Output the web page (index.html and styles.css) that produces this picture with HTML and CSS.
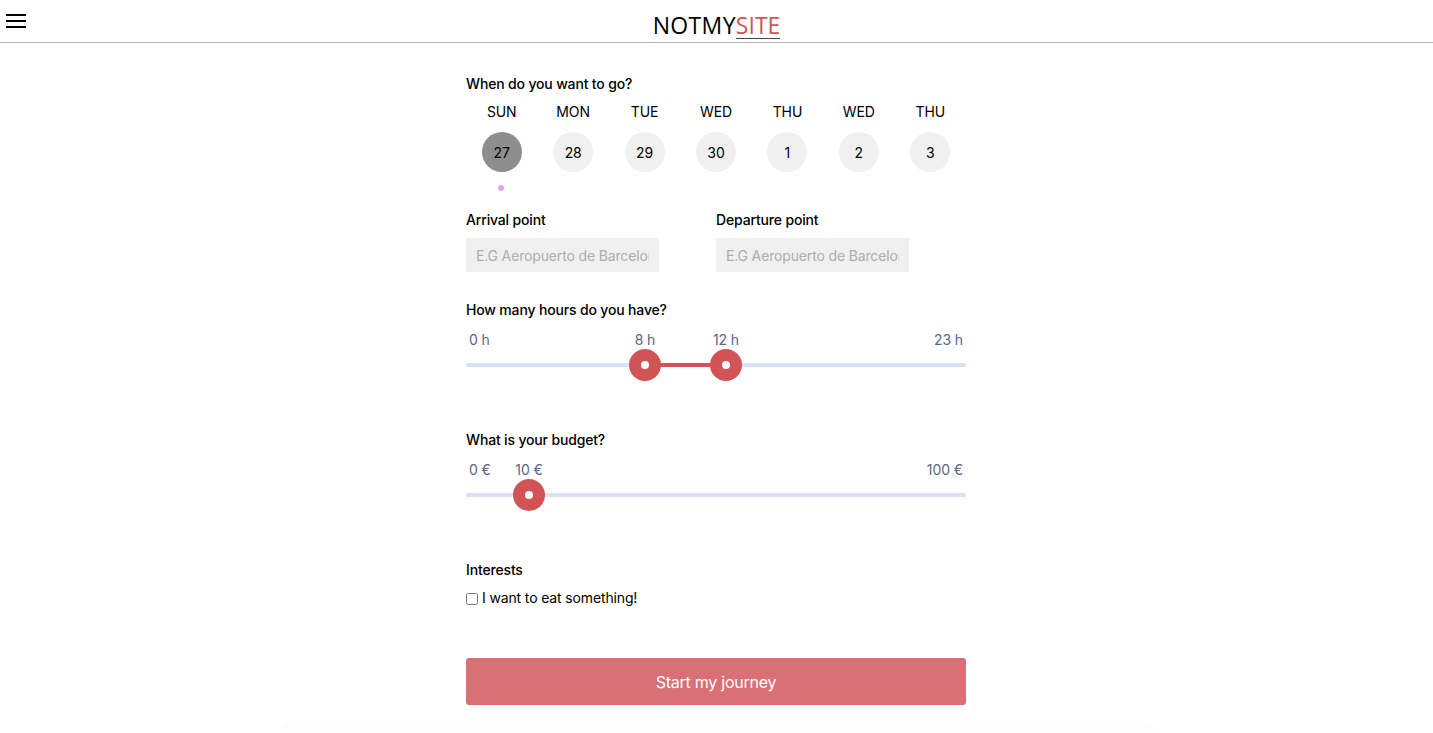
FILE: index.html
```html
<!DOCTYPE html>
<html lang="en">
<head>
<meta charset="UTF-8">
<title>NotMySite</title>
<link rel="stylesheet" href="styles.css">
</head>
<body>
<header class="topbar">
  <button class="burger" aria-label="Menu">
    <svg width="20" height="14" viewBox="0 0 20 14"><path d="M0 1h20M0 7h20M0 13h20" stroke="#000" stroke-width="2"/></svg>
  </button>
  <a class="logo"><span class="logo-dark">NOTMY</span><span class="logo-red">SITE</span></a>
</header>

<main class="form">
  <section class="when">
    <h3 class="label">When do you want to go?</h3>
    <div class="days">
      <div class="day"><span class="day-name">SUN</span><span class="day-num active">27</span><span class="dot"></span></div>
      <div class="day"><span class="day-name">MON</span><span class="day-num">28</span></div>
      <div class="day"><span class="day-name">TUE</span><span class="day-num">29</span></div>
      <div class="day"><span class="day-name">WED</span><span class="day-num">30</span></div>
      <div class="day"><span class="day-name">THU</span><span class="day-num">1</span></div>
      <div class="day"><span class="day-name">WED</span><span class="day-num">2</span></div>
      <div class="day"><span class="day-name">THU</span><span class="day-num">3</span></div>
    </div>
  </section>

  <section class="points">
    <div class="point">
      <label class="label">Arrival point</label>
      <input type="text" placeholder="E.G Aeropuerto de Barcelona">
    </div>
    <div class="point">
      <label class="label">Departure point</label>
      <input type="text" placeholder="E.G Aeropuerto de Barcelona">
    </div>
  </section>

  <section class="hours">
    <h3 class="label">How many hours do you have?</h3>
    <div class="slider">
      <span class="end end-min">0 h</span>
      <span class="end end-max">23 h</span>
      <span class="val" style="left:179px">8 h</span>
      <span class="val" style="left:260px">12 h</span>
      <div class="track"></div>
      <div class="range" style="left:179px;width:81px"></div>
      <span class="thumb" style="left:179px"></span>
      <span class="thumb" style="left:260px"></span>
    </div>
  </section>

  <section class="budget">
    <h3 class="label">What is your budget?</h3>
    <div class="slider">
      <span class="end end-min">0 €</span>
      <span class="end end-max">100 €</span>
      <span class="val" style="left:63px">10 €</span>
      <div class="track"></div>
      <span class="thumb" style="left:63px"></span>
    </div>
  </section>

  <section class="interests">
    <h3 class="label">Interests</h3>
    <label class="check"><input type="checkbox"> I want to eat something!</label>
  </section>

  <button class="start">Start my journey</button>
</main>
<div class="bottom-fade"></div>
</body>
</html>
```

FILE: styles.css
```css
* {
  box-sizing: border-box;
}
body {
  margin: 0;
  height: 733px;
  overflow: hidden;
  background: #fff;
  color: #000;
  font-family: Inter, "Liberation Sans", sans-serif;
  font-size: 14px;
  letter-spacing: -0.1px;
}
.topbar {
  position: relative;
  height: 43px;
  border-bottom: 1px solid #b5b5b5;
  text-align: center;
}
.burger {
  position: absolute;
  left: 6px;
  top: 14px;
  padding: 0;
  border: none;
  background: none;
  line-height: 0;
}
.logo {
  display: inline-block;
  margin-top: 12px;
  font-family: "Open Sans", sans-serif;
  font-size: 23px;
  line-height: 26px;
  letter-spacing: 0;
  color: #000;
}
.logo-dark {
  letter-spacing: 0.35px;
}
.logo-red {
  display: inline-block;
  line-height: 25px;
  color: #d25355;
  border-bottom: 1px solid #444;
}
.form {
  width: 501px;
  padding-right: 1px;
  margin: 0 auto;
}
.label {
  display: block;
  margin: 0;
  font-size: 14px;
  font-weight: 500;
  line-height: 18px;
  letter-spacing: -0.16px;
}
.when {
  padding-top: 32px;
}
.days {
  display: grid;
  grid-template-columns: repeat(7, 1fr);
  margin-top: 10px;
  height: 90px;
}
.day {
  display: flex;
  flex-direction: column;
  align-items: center;
}
.day-name {
  line-height: 18px;
}
.day-num {
  display: flex;
  align-items: center;
  justify-content: center;
  width: 40px;
  height: 40px;
  margin-top: 11px;
  border-radius: 50%;
  background: #f0f0f0;
}
.day-num.active {
  background: #8e8e8e;
}
.dot {
  width: 6px;
  height: 6px;
  margin-top: 13px;
  margin-right: 2px;
  border-radius: 50%;
  background: #e2a3e2;
}
.points {
  display: flex;
  gap: 57px;
  margin-top: 18px;
}
.point {
  width: 193px;
}
.point input {
  display: block;
  width: 193px;
  height: 34px;
  margin-top: 9px;
  padding: 0 10px;
  border: none;
  background: #f0f0f0;
  font-family: inherit;
  font-size: 14px;
  letter-spacing: -0.15px;
}
.point input::placeholder {
  color: #adadad;
}
.hours {
  margin-top: 29px;
}
.budget {
  margin-top: 44px;
}
.slider {
  position: relative;
  height: 56px;
  margin-top: 12px;
  color: #5a6785;
}
.end,
.val {
  position: absolute;
  top: 0;
  line-height: 18px;
}
.end-min {
  left: 3px;
}
.end-max {
  right: 3px;
}
.val {
  transform: translateX(-50%);
}
.track {
  position: absolute;
  left: 0;
  right: 0;
  top: 32px;
  height: 4px;
  border-radius: 2px;
  background: #d9e2f5;
}
.range {
  position: absolute;
  top: 32px;
  height: 4px;
  background: #d25355;
}
.thumb {
  position: absolute;
  top: 18px;
  width: 32px;
  height: 32px;
  margin-left: -16px;
  border-radius: 50%;
  background: #d25355;
}
.thumb::after {
  content: "";
  position: absolute;
  left: 12px;
  top: 12px;
  width: 8px;
  height: 8px;
  border-radius: 50%;
  background: #fff;
}
.interests {
  margin-top: 44px;
}
.check {
  display: flex;
  align-items: center;
  gap: 4px;
  margin-top: 10px;
  line-height: 18px;
  letter-spacing: -0.14px;
}
.check input {
  width: 12px;
  height: 12px;
  margin: 2px 0 0;
}
.start {
  display: block;
  width: 500px;
  height: 47px;
  margin-top: 51px;
  border: none;
  border-radius: 3px;
  background: #d97075;
  color: #fff;
  font-family: inherit;
  font-size: 16px;
  letter-spacing: -0.25px;
}
.bottom-fade {
  position: absolute;
  left: 280px;
  right: 280px;
  top: 720px;
  height: 13px;
  border-radius: 12px 12px 0 0;
  background: #fdfdfd;
}
```
